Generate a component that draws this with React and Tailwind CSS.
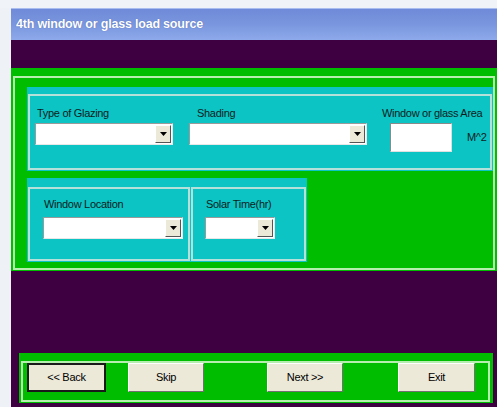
import React from 'react';

const font = { fontFamily: '"Liberation Sans", Arial, sans-serif' };

const Arrow = () => (
    <svg width="7" height="4" viewBox="0 0 7 4">
        <path d="M0 0 H7 L3.5 4 Z" fill="#000" />
    </svg>
);

const Combo = ({ width }) => (
    <div
        className="h-[22px] bg-white border border-t-[#9a9a9a] border-l-[#9a9a9a] border-r-[#e8e8e8] border-b-[#e8e8e8] flex justify-end items-stretch p-[1px]"
        style={{ width }}
    >
        <div className="w-[16px] bg-[#ece9d8] border border-t-white border-l-white border-r-[#555] border-b-[#555] flex items-center justify-center">
            <Arrow />
        </div>
    </div>
);

const Label = ({ children, className = '' }) => (
    <div className={`text-[11px] leading-[13px] tracking-[-0.3px] text-[#0c1c1c] whitespace-nowrap ${className}`}>
        {children}
    </div>
);

const NavButton = ({ children, className = '', isDefault }) => (
    <button
        type="button"
        className={`h-[29px] bg-[#ece9d8] text-[11px] tracking-[-0.3px] text-black ${
            isDefault
                ? 'border-2 border-[#1a1a1a]'
                : 'border border-t-white border-l-white border-r-[#707070] border-b-[#707070]'
        } ${className}`}
    >
        {children}
    </button>
);

export default function App() {
    return (
        <div className="w-[497px] h-[407px] bg-[#f0f3f8] flex flex-col overflow-hidden" style={font}>
            <div className="h-[8px] shrink-0" />
            <div className="flex flex-1">
                <div className="w-[11px] shrink-0 bg-[#eef1f6]" />
                <div className="flex-1 flex flex-col">
                    {/* title bar */}
                    <div className="h-[32px] shrink-0 bg-gradient-to-b from-[#6f8bd9] via-[#7a96de] to-[#8eaaeb] flex items-center pl-[5px] border-t border-[#a9bdf0]">
                        <span className="text-white font-bold text-[12.5px] tracking-[-0.2px] [text-shadow:0_0_1px_#4a60a8]">
                            4th window or glass load source
                        </span>
                    </div>
                    <div className="h-[28px] shrink-0 bg-[#3e0040]" />

                    {/* input area */}
                    <div className="h-[203px] shrink-0 bg-[#00bd00] pt-[8px] pl-[2px] pr-[2px] pb-[1px]">
                        <div className="h-full border-2 border-[#b6eeb0] pl-[12px] pt-[9px]">
                            <div className="w-[466px] h-[84px] bg-[#0cc4c4] pt-[7px] pl-[1px] pr-[1px] pb-[1px]">
                                <div className="h-full border-2 border-[#b4e2da] flex items-start pt-[11px]">
                                    <div className="ml-[5px] w-[138px]">
                                        <Label className="pl-[2px]">Type of Glazing</Label>
                                        <div className="mt-[3px]">
                                            <Combo width={138} />
                                        </div>
                                    </div>
                                    <div className="ml-[16px] w-[178px]">
                                        <Label className="pl-[8px]">Shading</Label>
                                        <div className="mt-[3px]">
                                            <Combo width={178} />
                                        </div>
                                    </div>
                                    <div className="ml-[15px]">
                                        <Label>Window or glass Area</Label>
                                        <div className="mt-[3px] flex items-center">
                                            <div className="ml-[8px] w-[62px] h-[29px] bg-white border border-t-[#8a8a8a] border-l-[#8a8a8a] border-r-[#e0e0e0] border-b-[#e0e0e0]" />
                                            <Label className="ml-[15px]">M^2</Label>
                                        </div>
                                    </div>
                                </div>
                            </div>

                            <div className="mt-[7px] w-[280px] h-[84px] bg-[#0cc4c4] pt-[9px] pl-[1px] pb-[1px] flex">
                                <div className="w-[162px] h-full border-2 border-[#b4e2da] pt-[9px] pl-[13px]">
                                    <Label className="pl-[1px]">Window Location</Label>
                                    <div className="mt-[6px]">
                                        <Combo width={140} />
                                    </div>
                                </div>
                                <div className="ml-[1px] w-[115px] h-full border-2 border-[#b4e2da] pt-[9px] pl-[12px]">
                                    <Label className="pl-[1px]">Solar Time(hr)</Label>
                                    <div className="mt-[6px]">
                                        <Combo width={70} />
                                    </div>
                                </div>
                            </div>
                        </div>
                    </div>

                    {/* navigation */}
                    <div className="flex-1 bg-[#3e0040] pl-[8px] pr-[4px] pt-[82px]">
                        <div className="h-[50px] bg-[#00bd00] pt-[8px] pl-[2px] pr-[3px] pb-[1px]">
                            <div className="h-full border-2 border-[#b6eeb0] flex items-start -mt-[0px]">
                                <NavButton isDefault className="ml-[4px] w-[79px]">&lt;&lt; Back</NavButton>
                                <NavButton className="ml-[22px] w-[76px]">Skip</NavButton>
                                <NavButton className="ml-[63px] w-[76px]">Next &gt;&gt;</NavButton>
                                <NavButton className="ml-[55px] w-[77px]">Exit</NavButton>
                            </div>
                        </div>
                    </div>
                </div>
            </div>
        </div>
    );
}
